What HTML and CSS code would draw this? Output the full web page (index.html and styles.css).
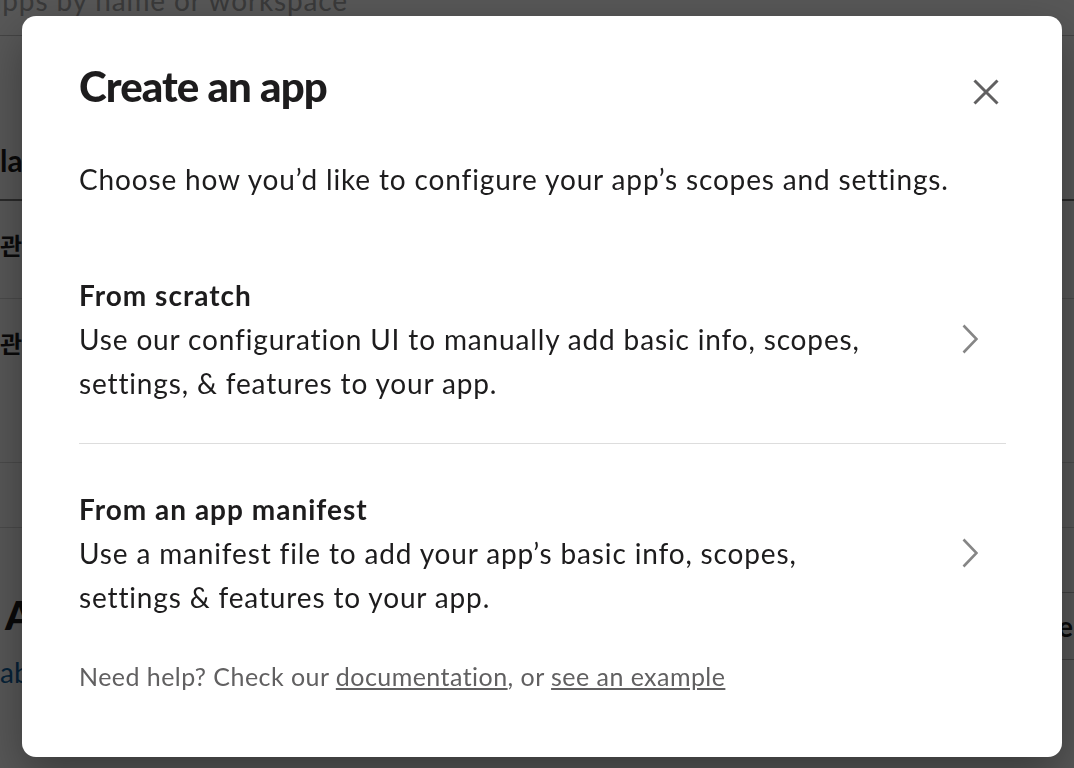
FILE: index.html
```html
<!DOCTYPE html>
<html lang="en">
<head>
<meta charset="utf-8">
<title>Create an app</title>
<link rel="stylesheet" href="styles.css">
</head>
<body>
<div class="page">
  <div class="search-row"><span class="search-text">Search apps by name or workspace</span></div>
  <div class="head-row"><span class="head-text">lable</span></div>
  <div class="app-row"><span class="app-text">관리자</span></div>
  <div class="app-row tall"><span class="app-text">관리자</span></div>
  <div class="empty-row"></div>
  <div class="section">
    <div class="section-left">
      <div class="section-title">Apps</div>
      <div class="section-link">about</div>
    </div>
    <div class="section-btn">Create</div>
  </div>
</div>
<div class="overlay"></div>
<div class="modal" role="dialog" aria-label="Create an app">
  <div class="modal-header">
    <h1 class="modal-title">Create an app</h1>
    <button class="close-btn" aria-label="Close">
      <svg width="26" height="26" viewBox="0 0 26 26"><path d="M1.5 1.5 L24.5 24.5 M24.5 1.5 L1.5 24.5" stroke="#616061" stroke-width="3" fill="none"/></svg>
    </button>
  </div>
  <p class="intro">Choose how you’d like to configure your app’s scopes and settings.</p>
  <div class="options">
    <a class="option" href="#">
      <div class="option-text">
        <div class="option-title">From scratch</div>
        <div class="option-desc">Use our configuration UI to manually add basic info, scopes, settings, &amp; features to your app.</div>
      </div>
      <svg class="chevron" viewBox="0 0 16 30"><path d="M1.5 1.5 L14.5 15 L1.5 28.5" stroke="#868686" stroke-width="2.6" fill="none"/></svg>
    </a>
    <a class="option" href="#">
      <div class="option-text">
        <div class="option-title">From an app manifest</div>
        <div class="option-desc">Use a manifest file to add your app’s basic info, scopes, settings &amp; features to your app.</div>
      </div>
      <svg class="chevron" viewBox="0 0 16 30"><path d="M1.5 1.5 L14.5 15 L1.5 28.5" stroke="#868686" stroke-width="2.6" fill="none"/></svg>
    </a>
  </div>
  <p class="help">Need help? Check our <a href="#">documentation</a>, or <a href="#">see an example</a></p>
</div>
</body>
</html>
```
FILE: styles.css
```css
html, body {
  margin: 0;
  height: 768px;
  overflow: hidden;
}
body {
  font-family: Lato, "Noto Sans CJK KR", sans-serif;
  background: #ffffff;
  color: #1d1c1d;
}
.page {
  width: 1074px;
}
.search-row {
  height: 36px;
  box-sizing: border-box;
  border-bottom: 1px solid #c6c6c6;
  overflow: hidden;
}
.search-text {
  display: block;
  font-size: 28px;
  line-height: 28px;
  letter-spacing: 0.85px;
  margin-top: -14px;
  margin-left: -108px;
  color: #a8a8a8;
  white-space: nowrap;
}
.head-row {
  height: 165px;
  box-sizing: border-box;
  padding-top: 104px;
  border-bottom: 2px solid #7a7a7a;
}
.head-text {
  display: block;
  font-size: 30px;
  font-weight: 700;
  line-height: 40px;
}
.app-row {
  height: 98px;
  box-sizing: border-box;
  padding-top: 30px;
  border-bottom: 1px solid #d8d8d8;
}
.app-row.tall {
  height: 164px;
}
.app-text {
  display: block;
  font-size: 24px;
  line-height: 30px;
  font-weight: 700;
}
.empty-row {
  height: 65px;
  box-sizing: border-box;
  border-bottom: 1px solid #d8d8d8;
}
.section {
  display: flex;
  justify-content: space-between;
  align-items: flex-start;
}
.section-left {
  padding-top: 63px;
  margin-left: 5px;
}
.section-title {
  font-size: 40px;
  font-weight: 900;
  line-height: 48px;
}
.section-link {
  margin-top: 15px;
  margin-left: -5px;
  font-size: 28px;
  line-height: 36px;
  color: #1264a3;
}
.section-btn {
  margin-top: 64px;
  height: 68px;
  box-sizing: border-box;
  border: 1px solid #bcbcbc;
  border-right: 0;
  padding: 0 20px;
  font-size: 28px;
  font-weight: 700;
  line-height: 66px;
  margin-right: -19px;
  white-space: nowrap;
}
.overlay {
  position: fixed;
  inset: 0;
  background: rgba(0, 0, 0, 0.66);
}
.modal {
  position: fixed;
  left: 22px;
  top: 16px;
  width: 1040px;
  height: 741px;
  box-sizing: border-box;
  background: #ffffff;
  border-radius: 14px;
  box-shadow: 0 18px 48px rgba(0, 0, 0, 0.35);
  padding: 45px 56px 0 57px;
  color: #1d1c1d;
}
.modal-header {
  display: flex;
  justify-content: space-between;
  align-items: flex-start;
}
.modal-title {
  margin: 0;
  font-size: 42px;
  font-weight: 900;
  line-height: 50px;
  letter-spacing: -0.9px;
}
.close-btn {
  width: 40px;
  height: 40px;
  margin-top: 11px;
  padding: 0;
  border: 0;
  background: none;
  display: flex;
  align-items: center;
  justify-content: center;
  cursor: pointer;
}
.intro {
  margin: 45px 0 0;
  font-size: 28px;
  line-height: 44px;
  letter-spacing: 0.85px;
}
.options {
  margin-top: 72px;
}
.option {
  display: flex;
  align-items: center;
  justify-content: space-between;
  text-decoration: none;
  color: inherit;
  padding-bottom: 38px;
  border-bottom: 1px solid #dddddd;
}
.option:last-child {
  border-bottom: 0;
  padding: 43px 0 0;
}
.option-title {
  font-size: 28px;
  font-weight: 700;
  line-height: 44px;
  letter-spacing: 1px;
}
.option-desc {
  font-size: 28px;
  line-height: 44px;
  letter-spacing: 0.85px;
  max-width: 800px;
}
.chevron {
  width: 16px;
  height: 30px;
  margin-right: 28px;
  flex-shrink: 0;
}
.help {
  margin: 39px 0 0;
  font-size: 25px;
  line-height: 36px;
  letter-spacing: 0.45px;
  color: #616061;
}
.help a {
  color: inherit;
  text-decoration: underline;
}
```
